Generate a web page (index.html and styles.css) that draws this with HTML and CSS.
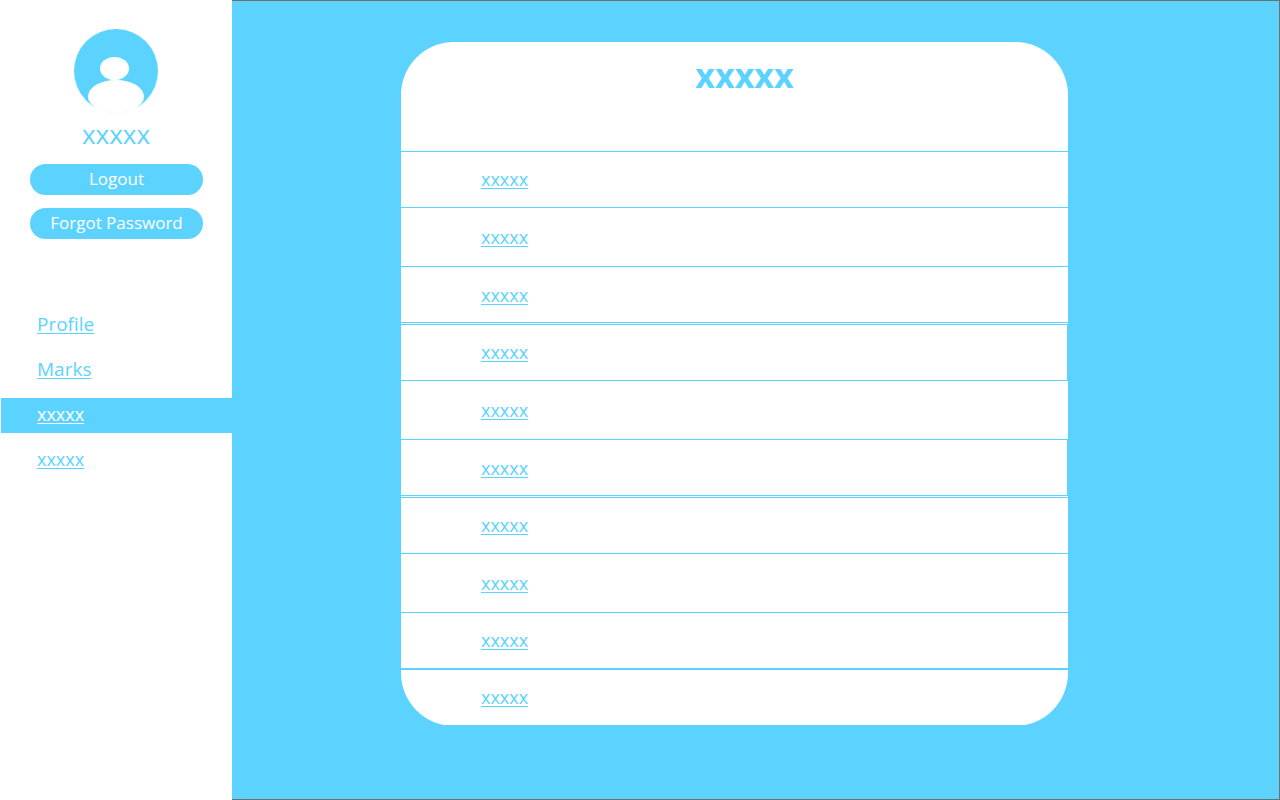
FILE: index.html
```html
<!DOCTYPE html>
<html lang="en">
<head>
<meta charset="utf-8">
<meta name="viewport" content="width=device-width, initial-scale=1">
<title>xxxxx</title>
<link rel="stylesheet" href="styles.css">
</head>
<body>
<div class="page">
  <aside class="sidebar">
    <div class="account">
      <svg class="avatar" viewBox="0 0 84 84" aria-hidden="true">
        <circle class="avatar-disc" cx="42" cy="42" r="42"/>
        <ellipse class="avatar-person" cx="40.5" cy="39.5" rx="14.5" ry="11.5"/>
        <ellipse class="avatar-person" cx="42" cy="67.5" rx="28" ry="16.5"/>
      </svg>
      <p class="username">xxxxx</p>
    </div>
    <div class="actions">
      <button class="pill" type="button">Logout</button>
      <button class="pill" type="button">Forgot Password</button>
    </div>
    <nav class="menu">
      <a class="menu-link menu-link-large" href="#profile">Profile</a>
      <a class="menu-link menu-link-large" href="#marks">Marks</a>
      <a class="menu-link menu-link-active" href="#list" aria-current="page">xxxxx</a>
      <a class="menu-link" href="#other">xxxxx</a>
    </nav>
  </aside>
  <main class="content">
    <section class="card">
      <h1 class="card-title">xxxxx</h1>
      <ul class="rows">
        <li class="row row-boxed"><a href="#1">xxxxx</a></li>
        <li class="row"><a href="#2">xxxxx</a></li>
        <li class="row row-boxed row-spaced"><a href="#3">xxxxx</a></li>
        <li class="row row-boxed row-edged"><a href="#4">xxxxx</a></li>
        <li class="row"><a href="#5">xxxxx</a></li>
        <li class="row row-boxed row-edged row-spaced"><a href="#6">xxxxx</a></li>
        <li class="row row-boxed"><a href="#7">xxxxx</a></li>
        <li class="row"><a href="#8">xxxxx</a></li>
        <li class="row row-boxed"><a href="#9">xxxxx</a></li>
        <li class="row row-last"><a href="#10">xxxxx</a></li>
      </ul>
    </section>
  </main>
</div>
</body>
</html>
```
FILE: styles.css
```css
:root {
  --sky: #5cd3ff;
  --frame: #707070;
}

* {
  box-sizing: border-box;
}

body {
  margin: 0;
  font-family: "Open Sans", "Noto Sans", sans-serif;
  font-size: 18px;
  line-height: 24px;
  color: var(--sky);
  background: #fff;
}

.page {
  display: flex;
  min-height: 100vh;
}

.sidebar {
  flex: 0 0 232px;
  background: #fff;
}

.account {
  display: flex;
  flex-direction: column;
  align-items: center;
  padding-top: 29px;
}

.avatar {
  width: 84px;
  height: 84px;
}

.avatar-disc {
  fill: var(--sky);
}

.avatar-person {
  fill: #fff;
}

.username {
  margin: 3px 0 12px;
  font-size: 26px;
  line-height: 36px;
}

.actions {
  display: flex;
  flex-direction: column;
  gap: 13px;
  padding: 0 29px 0 30px;
}

.pill {
  height: 31px;
  padding: 0 0 2px;
  border: 0;
  border-radius: 16px;
  background: var(--sky);
  color: #fff;
  font: inherit;
  font-size: 17px;
  line-height: 24px;
}

.menu {
  display: flex;
  flex-direction: column;
  gap: 10px;
  padding: 69px 0 0 1px;
}

.menu-link {
  padding: 4px 36px 7px;
  color: var(--sky);
  text-decoration-thickness: 1px;
  text-underline-offset: 2px;
}

.menu-link-large {
  font-size: 19px;
}

.menu-link-active {
  background: var(--sky);
  color: #fff;
}

.content {
  flex: 1;
  padding: 41px 211px 40px 169px;
  background: var(--sky);
  border: solid var(--frame);
  border-width: 1px 1px 1px 0;
}

.card {
  padding-bottom: 1px;
  overflow: hidden;
  background: #fff;
  border-radius: 53px;
  clip-path: inset(0 0 1px);
}

.card-title {
  margin: 0;
  padding: 9px 0 52px 20px;
  font-size: 34px;
  font-weight: 700;
  line-height: 48px;
  text-align: center;
}

.rows {
  margin: 0;
  padding: 0;
  list-style: none;
}

.row {
  display: flex;
  align-items: center;
  min-height: 58px;
  padding: 0 80px;
}

.row a {
  color: inherit;
  text-decoration-thickness: 1px;
  text-underline-offset: 2px;
}

.row-boxed {
  min-height: 57px;
  padding-bottom: 2px;
  border: solid var(--sky);
  border-width: 1px 0;
}

.row-edged {
  border-right-width: 1px;
}

.row-spaced {
  margin-bottom: 1px;
  padding-bottom: 0;
}

.row-last {
  min-height: 56px;
  padding-bottom: 2px;
  border-top: 1px solid var(--sky);
}
```
